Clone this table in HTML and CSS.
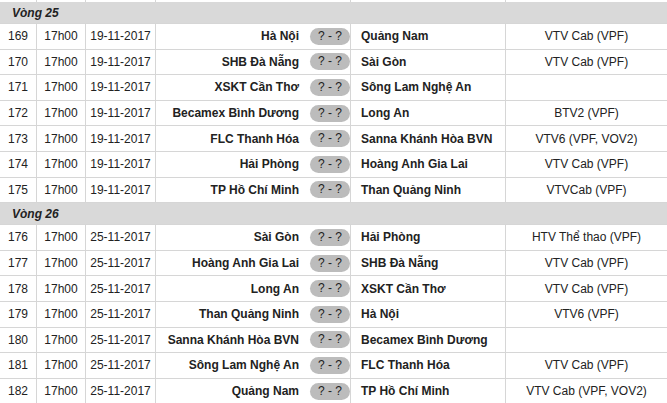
FILE: index.html
```html
<!DOCTYPE html>
<html lang="vi">
<head>
<meta charset="utf-8">
<link rel="stylesheet" href="styles.css">
</head>
<body>
<table class="schedule">
  <colgroup>
    <col class="c-num"><col class="c-time"><col class="c-date"><col class="c-home"><col class="c-score"><col class="c-away"><col class="c-tv">
  </colgroup>
  <tbody>
    <tr class="cut"><td></td><td></td><td></td><td class="home"></td><td class="score"></td><td></td><td></td></tr>
    <tr class="round"><td colspan="7">Vòng 25</td></tr>
    <tr><td>169</td><td>17h00</td><td>19-11-2017</td><td class="home">Hà Nội</td><td class="score"><span class="pill">? - ?</span></td><td class="away">Quảng Nam</td><td>VTV Cab (VPF)</td></tr>
    <tr><td>170</td><td>17h00</td><td>19-11-2017</td><td class="home">SHB Đà Nẵng</td><td class="score"><span class="pill">? - ?</span></td><td class="away">Sài Gòn</td><td>VTV Cab (VPF)</td></tr>
    <tr><td>171</td><td>17h00</td><td>19-11-2017</td><td class="home">XSKT Cần Thơ</td><td class="score"><span class="pill">? - ?</span></td><td class="away">Sông Lam Nghệ An</td><td></td></tr>
    <tr><td>172</td><td>17h00</td><td>19-11-2017</td><td class="home">Becamex Bình Dương</td><td class="score"><span class="pill">? - ?</span></td><td class="away">Long An</td><td>BTV2 (VPF)</td></tr>
    <tr><td>173</td><td>17h00</td><td>19-11-2017</td><td class="home">FLC Thanh Hóa</td><td class="score"><span class="pill">? - ?</span></td><td class="away">Sanna Khánh Hòa BVN</td><td>VTV6 (VPF, VOV2)</td></tr>
    <tr><td>174</td><td>17h00</td><td>19-11-2017</td><td class="home">Hải Phòng</td><td class="score"><span class="pill">? - ?</span></td><td class="away">Hoàng Anh Gia Lai</td><td>VTV Cab (VPF)</td></tr>
    <tr><td>175</td><td>17h00</td><td>19-11-2017</td><td class="home">TP Hồ Chí Minh</td><td class="score"><span class="pill">? - ?</span></td><td class="away">Than Quảng Ninh</td><td>VTVCab (VPF)</td></tr>
    <tr class="round"><td colspan="7">Vòng 26</td></tr>
    <tr><td>176</td><td>17h00</td><td>25-11-2017</td><td class="home">Sài Gòn</td><td class="score"><span class="pill">? - ?</span></td><td class="away">Hải Phòng</td><td>HTV Thể thao (VPF)</td></tr>
    <tr><td>177</td><td>17h00</td><td>25-11-2017</td><td class="home">Hoàng Anh Gia Lai</td><td class="score"><span class="pill">? - ?</span></td><td class="away">SHB Đà Nẵng</td><td>VTV Cab (VPF)</td></tr>
    <tr><td>178</td><td>17h00</td><td>25-11-2017</td><td class="home">Long An</td><td class="score"><span class="pill">? - ?</span></td><td class="away">XSKT Cần Thơ</td><td>VTV Cab (VPF)</td></tr>
    <tr><td>179</td><td>17h00</td><td>25-11-2017</td><td class="home">Than Quảng Ninh</td><td class="score"><span class="pill">? - ?</span></td><td class="away">Hà Nội</td><td>VTV6 (VPF)</td></tr>
    <tr><td>180</td><td>17h00</td><td>25-11-2017</td><td class="home">Sanna Khánh Hòa BVN</td><td class="score"><span class="pill">? - ?</span></td><td class="away">Becamex Bình Dương</td><td></td></tr>
    <tr><td>181</td><td>17h00</td><td>25-11-2017</td><td class="home">Sông Lam Nghệ An</td><td class="score"><span class="pill">? - ?</span></td><td class="away">FLC Thanh Hóa</td><td>VTV Cab (VPF)</td></tr>
    <tr><td>182</td><td>17h00</td><td>25-11-2017</td><td class="home">Quảng Nam</td><td class="score"><span class="pill">? - ?</span></td><td class="away">TP Hồ Chí Minh</td><td>VTV Cab (VPF, VOV2)</td></tr>
  </tbody>
</table>
</body>
</html>
```

FILE: styles.css
```css
html, body {
  margin: 0;
  padding: 0;
  background: #ffffff;
}

body {
  font-family: "Liberation Sans", Arial, sans-serif;
  font-size: 12px;
  color: #222222;
  overflow: hidden;
}

.schedule {
  width: 667px;
  table-layout: fixed;
  border-collapse: separate;
  border-spacing: 0;
}

.c-num { width: 37px; }
.c-time { width: 49px; }
.c-date { width: 70px; }
.c-home { width: 152px; }
.c-score { width: 43px; }
.c-away { width: 155px; }
.c-tv { width: 161px; }

.schedule td {
  height: 24.6px;
  padding: 0;
  text-align: center;
  vertical-align: middle;
  border-right: 1px solid #d6d6d6;
  border-bottom: 1px solid #d6d6d6;
  white-space: nowrap;
  overflow: hidden;
}

.schedule td:last-child {
  border-right: none;
}

.schedule td.home {
  text-align: right;
  padding-right: 9px;
  font-weight: bold;
  border-right: none;
}

.schedule td.away {
  text-align: left;
  padding-left: 10px;
  font-weight: bold;
}

.schedule td.score {
  text-align: left;
}

.pill {
  display: inline-block;
  width: 40px;
  height: 17px;
  line-height: 17px;
  margin-left: 2px;
  border-radius: 9px;
  background: #bcbcbc;
  color: #222222;
  text-align: center;
  font-size: 12px;
}

.cut td {
  height: 2px;
  border-bottom: none;
}

.round td {
  height: 21px;
  background: #d9d9d9;
  text-align: left;
  padding-left: 12px;
  font-weight: bold;
  font-style: italic;
  border-right: none;
}
```
